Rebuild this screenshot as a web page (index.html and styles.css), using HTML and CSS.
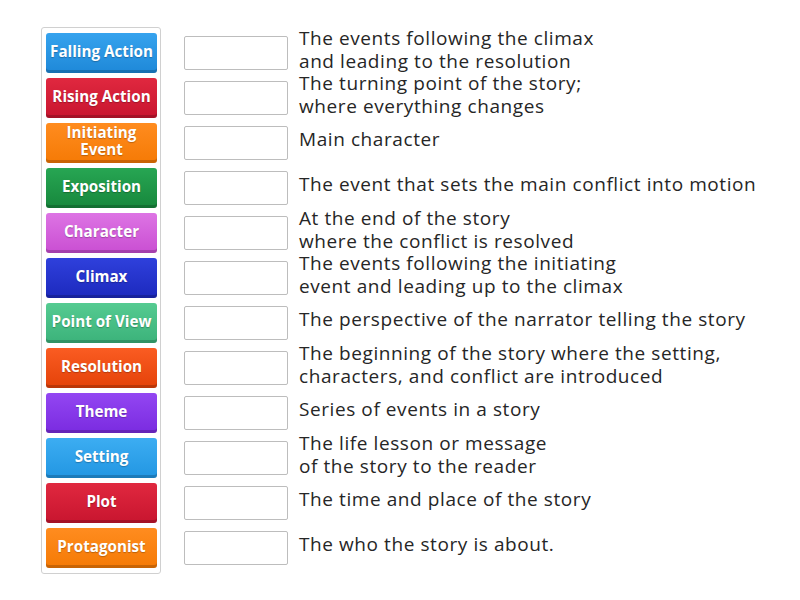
FILE: index.html
```html
<!DOCTYPE html>
<html>
<head>
<meta charset="utf-8">
<link rel="stylesheet" href="styles.css">
</head>
<body>
<div class="page">
  <div class="tiles">
    <div class="tile blue">Falling Action</div>
    <div class="tile red">Rising Action</div>
    <div class="tile orange two">Initiating<br>Event</div>
    <div class="tile green">Exposition</div>
    <div class="tile pink">Character</div>
    <div class="tile navy">Climax</div>
    <div class="tile mint">Point of View</div>
    <div class="tile vermilion">Resolution</div>
    <div class="tile purple">Theme</div>
    <div class="tile sky">Setting</div>
    <div class="tile red">Plot</div>
    <div class="tile orange">Protagonist</div>
  </div>
  <div class="rows">
    <div class="row"><div class="slot"></div><div class="def">The events following the climax<br>and leading to the resolution</div></div>
    <div class="row"><div class="slot"></div><div class="def">The turning point of the story;<br>where everything changes</div></div>
    <div class="row"><div class="slot"></div><div class="def">Main character</div></div>
    <div class="row"><div class="slot"></div><div class="def">The event that sets the main conflict into motion</div></div>
    <div class="row"><div class="slot"></div><div class="def">At the end of the story<br>where the conflict is resolved</div></div>
    <div class="row"><div class="slot"></div><div class="def">The events following the initiating<br>event and leading up to the climax</div></div>
    <div class="row"><div class="slot"></div><div class="def">The perspective of the narrator telling the story</div></div>
    <div class="row"><div class="slot"></div><div class="def">The beginning of the story where the setting,<br>characters, and conflict are introduced</div></div>
    <div class="row"><div class="slot"></div><div class="def">Series of events in a story</div></div>
    <div class="row"><div class="slot"></div><div class="def">The life lesson or message<br>of the story to the reader</div></div>
    <div class="row"><div class="slot"></div><div class="def">The time and place of the story</div></div>
    <div class="row"><div class="slot"></div><div class="def">The who the story is about.</div></div>
  </div>
</div>
</body>
</html>
```

FILE: styles.css
```css
html, body {
  margin: 0;
  padding: 0;
  background: #fff;
}
body {
  font-family: "Open Sans", "Liberation Sans", sans-serif;
}
.page {
  display: flex;
  align-items: flex-start;
  padding: 27px 0 0 41px;
}
.tiles {
  display: flex;
  flex-direction: column;
  gap: 5px;
  padding: 5px 3px 5px 4px;
  border: 1px solid #d0d0d0;
  border-radius: 3px;
}
.tile {
  width: 111px;
  height: 40px;
  box-sizing: border-box;
  border-radius: 3px;
  display: flex;
  align-items: center;
  justify-content: center;
  text-align: center;
  color: #fff;
  font-weight: 700;
  font-size: 15.2px;
  line-height: 17px;
  text-shadow: 0 1px 1px rgba(0,0,0,0.25);
  box-shadow: inset 0 -3px 0 rgba(0,0,0,0.18);
  padding-bottom: 4px;
}
.blue { background: linear-gradient(#36a3ee, #1e88d8); }
.red { background: linear-gradient(#e0283f, #c8152f); }
.orange { background: linear-gradient(#ff8c1f, #f57a05); }
.green { background: linear-gradient(#27a653, #17873c); }
.pink { background: linear-gradient(#dd74e4, #c94ed2); }
.navy { background: linear-gradient(#2f40dc, #1c29bd); }
.mint { background: linear-gradient(#55cb91, #3bb27a); }
.vermilion { background: linear-gradient(#fa5c22, #e44209); }
.purple { background: linear-gradient(#9346f2, #7a2be0); }
.sky { background: linear-gradient(#3cadf2, #2296e2); }
.rows {
  display: flex;
  flex-direction: column;
  gap: 5px;
  padding-top: 6px;
  margin-left: 23px;
}
.row {
  height: 40px;
  display: flex;
  align-items: center;
}
.slot {
  width: 104px;
  height: 34px;
  box-sizing: border-box;
  border: 1px solid #bdbdbd;
  border-radius: 2px;
  background: #fff;
  flex: none;
}
.def {
  margin-left: 11px;
  font-size: 19px;
  letter-spacing: 0.58px;
  line-height: 22.5px;
  color: #262626;
  white-space: nowrap;
  margin-top: -7px;
}
```
